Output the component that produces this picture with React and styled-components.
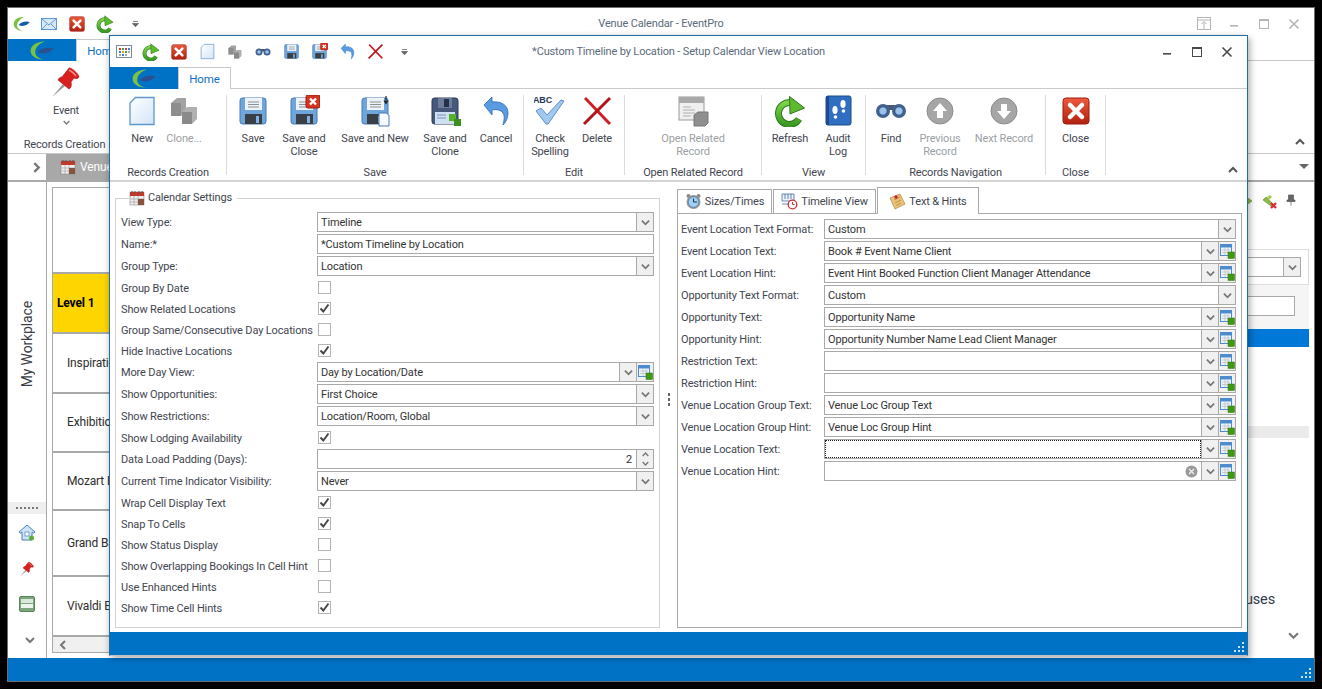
import React from "react";
import styled, { createGlobalStyle } from "styled-components";

const GlobalStyle = createGlobalStyle`
    html, body {
        margin: 0;
        padding: 0;
        background: #000;
        overflow: hidden;
    }
    body {
        font-family: "Roboto", "Liberation Sans", sans-serif;
        font-size: 11px;
        letter-spacing: -0.15px;
        color: #3f4650;
    }
`;

const Screen = styled.div`
    position: relative;
    width: 1322px;
    height: 689px;
    padding: 7px;
    box-sizing: border-box;
    background: #000;
`;

const AppWindow = styled.div`
    width: 1308px;
    height: 675px;
    box-sizing: border-box;
    border: 1px solid #6e6e6e;
    background: #fff;
    display: flex;
    flex-direction: column;
    overflow: hidden;
`;

const TitleBar = styled.div`
    position: relative;
    display: flex;
    align-items: center;
    height: ${(p) => p.$height}px;
    flex: none;
`;

const Qat = styled.div`
    display: flex;
    align-items: center;
    padding-left: ${(p) => p.$pad}px;
    svg { flex: none; }
`;

const QatSlot = styled.div`
    width: ${(p) => p.$w || 28}px;
    height: 22px;
    display: flex;
    align-items: center;
    justify-content: center;
`;

const TitleText = styled.div`
    position: absolute;
    top: 0;
    bottom: 0;
    left: 0;
    right: 0;
    display: flex;
    align-items: center;
    justify-content: center;
    padding-left: ${(p) => p.$shift || 0}px;
    color: #5a6a7a;
    pointer-events: none;
`;

const WindowButtons = styled.div`
    margin-left: auto;
    display: flex;
    align-items: center;
    padding-right: ${(p) => p.$pad}px;
`;

const WindowButton = styled.div`
    width: 30px;
    height: 22px;
    display: flex;
    align-items: center;
    justify-content: center;
`;

const TabRow = styled.div`
    height: 22px;
    flex: none;
    box-sizing: border-box;
    display: flex;
    border-bottom: 1px solid #c9c9c9;
`;

const LogoTab = styled.div`
    width: ${(p) => p.$w}px;
    height: 22px;
    background: #0072c6;
    display: flex;
    align-items: center;
    justify-content: center;
`;

const HomeTab = styled.div`
    width: 53px;
    height: 22px;
    box-sizing: border-box;
    background: #fff;
    border: 1px solid #c9c9c9;
    border-bottom: none;
    color: #0f6fc6;
    font-size: 11.5px;
    display: flex;
    align-items: center;
    justify-content: center;
`;

const BackRibbon = styled.div`
    position: relative;
    height: 93px;
    flex: none;
    box-sizing: border-box;
    border-bottom: 1px solid #c9c9c9;
    display: flex;
`;

const BackGroup = styled.div`
    width: 116px;
    display: flex;
    flex-direction: column;
    align-items: center;
    padding-top: 5px;
    box-sizing: border-box;
`;

const BackEventLabel = styled.div`
    margin-top: 5px;
    line-height: 16px;
`;

const BackLabel = styled.div`
    margin-top: auto;
    padding: 0 3px 0 0;
    white-space: nowrap;
    line-height: 16px;
`;

const CollapseMark = styled.div`
    position: absolute;
    right: ${(p) => p.$right}px;
    bottom: ${(p) => p.$bottom}px;
    line-height: 0;
`;

const BackStrip = styled.div`
    position: relative;
    height: 28px;
    flex: none;
    box-sizing: border-box;
    border-bottom: 2px solid #a9a9a9;
    display: flex;
`;

const StripToggle = styled.div`
    width: 39px;
    box-sizing: border-box;
    border-right: 1px solid #a9a9a9;
    display: flex;
    align-items: center;
    justify-content: center;
    padding-left: 18px;
`;

const DocTab = styled.div`
    width: 62px;
    flex: none;
    overflow: hidden;
    white-space: nowrap;
    background: #a8a8a8;
    color: #fff;
    font-size: 12px;
    display: flex;
    align-items: center;
    gap: 4px;
    padding-left: 13px;
    box-sizing: border-box;
    svg { flex: none; }
`;

const DropMark = styled.div`
    margin-left: auto;
    width: 0;
    height: 0;
    margin-right: 5px;
    margin-top: 10px;
    border-left: 5px solid transparent;
    border-right: 5px solid transparent;
    border-top: 5px solid #666;
`;

const BackBody = styled.div`
    flex: 1;
    display: flex;
    min-height: 0;
`;

const NavColumn = styled.div`
    width: 39px;
    flex: none;
    box-sizing: border-box;
    border-right: 1px solid #a9a9a9;
    display: flex;
    flex-direction: column;
    align-items: center;
`;

const VerticalLabel = styled.div`
    margin-top: 119px;
    height: 88px;
    writing-mode: vertical-rl;
    transform: rotate(180deg);
    font-size: 14px;
    color: #3a3f47;
    text-align: center;
    white-space: nowrap;
`;

const NavGrip = styled.div`
    margin-top: 114px;
    width: 100%;
    height: 12px;
    background: #efefef;
    display: flex;
    align-items: center;
    justify-content: center;
    gap: 2px;
    span {
        width: 2px;
        height: 2px;
        background: #777;
    }
`;

const NavIcon = styled.div`
    height: 36px;
    width: 100%;
    display: flex;
    align-items: center;
    justify-content: center;
`;

const NavFirst = styled(NavIcon)`
    margin-top: 1px;
`;

const NavMore = styled(NavIcon)`
    padding-left: 6px;
    box-sizing: border-box;
`;

const GridWrap = styled.div`
    flex: 1;
    min-width: 0;
    padding: 5px 0 5px 5px;
    display: flex;
`;

const LocationGrid = styled.div`
    width: 60px;
    overflow: hidden;
    box-sizing: border-box;
    border: 1px solid #a9a9a9;
    border-right: none;
    display: flex;
    flex-direction: column;
`;

const LocationRow = styled.div`
    height: ${(p) => p.$h}px;
    flex: none;
    box-sizing: border-box;
    border-bottom: 2px solid #a9a9a9;
    background: ${(p) => (p.$level ? "#ffd500" : "#fff")};
    color: ${(p) => (p.$level ? "#000" : "#2c2c2c")};
    font-weight: ${(p) => (p.$level ? 700 : 400)};
    font-size: 12px;
    padding: 0 0 1px ${(p) => (p.$level ? 4 : 14)}px;
    display: flex;
    align-items: center;
    white-space: nowrap;
`;

const GridScroll = styled.div`
    flex: 1;
    background: #f0f0f0;
    display: flex;
    align-items: center;
    padding-left: 5px;
`;

const BackRight = styled.div`
    width: 120px;
    flex: none;
    display: flex;
    flex-direction: column;
    padding-right: 5px;
    box-sizing: border-box;
`;

const BackToolbar = styled.div`
    height: 67px;
    flex: none;
    display: flex;
    align-items: flex-start;
    justify-content: flex-end;
    gap: 8px;
    padding: 12px 13px 0 0;
    box-sizing: border-box;
`;

const FilterBox = styled.div`
    height: 36px;
    flex: none;
    box-sizing: border-box;
    border: 1px solid #dcdcdc;
    padding: 7px 7px 0 0;
`;

const BackCombo = styled.div`
    height: 20px;
    box-sizing: border-box;
    border: 1px solid #a9a9a9;
    display: flex;
    justify-content: flex-end;
`;

const FilterBand = styled.div`
    height: 44px;
    flex: none;
    background: #f5f5f5;
    padding: 11px 14px 0 0;
    box-sizing: border-box;
`;

const BackInput = styled.div`
    height: 20px;
    box-sizing: border-box;
    border: 1px solid #a9a9a9;
    background: #fff;
`;

const BlueRow = styled.div`
    height: 18px;
    flex: none;
    background: #0078d7;
`;

const GreyRow = styled.div`
    margin-top: 79px;
    height: 12px;
    flex: none;
    background: #ebebeb;
`;

const TreeText = styled.div`
    margin-top: 153px;
    font-size: 14.5px;
    color: #333c48;
    text-align: right;
    padding-right: 34px;
    white-space: nowrap;
`;

const TreeChevron = styled.div`
    margin-top: 22px;
    padding-right: 10px;
    display: flex;
    justify-content: flex-end;
`;

const StatusBar = styled.div`
    position: relative;
    height: ${(p) => p.$h}px;
    flex: none;
    background: #0072c6;
`;

const GripDots = styled.div`
    position: absolute;
    right: 2px;
    bottom: 2px;
    line-height: 0;
`;

const Dialog = styled.div`
    position: absolute;
    left: 109px;
    top: 35px;
    width: 1139px;
    height: 621px;
    box-sizing: border-box;
    border: 1px solid #1b6ea8;
    border-bottom-color: #c0c0c0;
    background: #fff;
    box-shadow: 3px 3px 6px rgba(0, 0, 0, 0.25), -2px 0 5px rgba(0, 0, 0, 0.12);
    display: flex;
    flex-direction: column;
`;

const Ribbon = styled.div`
    position: relative;
    height: 93px;
    flex: none;
    box-sizing: border-box;
    border-bottom: 2px solid #d4d4d4;
    display: flex;
    padding-top: 6px;
`;

const Group = styled.div`
    width: ${(p) => p.$w}px;
    height: 80px;
    flex: none;
    box-sizing: border-box;
    border-right: 1px solid #dcdcdc;
    display: flex;
    flex-direction: column;
`;

const GroupButtons = styled.div`
    flex: 1;
    display: flex;
    justify-content: ${(p) => (p.$center ? "center" : "flex-start")};
    padding-left: ${(p) => p.$pad || 0}px;
`;

const GroupLabel = styled.div`
    text-align: center;
    line-height: 16px;
    margin-bottom: -6px;
    white-space: nowrap;
    color: #3f4650;
`;

const RibbonButton = styled.div`
    width: ${(p) => p.$w}px;
    flex: none;
    display: flex;
    flex-direction: column;
    align-items: center;
    color: ${(p) => (p.$off ? "#9b9fa5" : "#3f4650")};
    text-align: center;
    line-height: 13px;
    svg { flex: none; }
`;

const ButtonCaption = styled.div`
    margin-top: 5px;
    white-space: pre-line;
`;

const DialogBody = styled.div`
    flex: 1;
    min-height: 0;
    display: flex;
    padding: 5px 5px 4px 5px;
`;

const SettingsBox = styled.fieldset`
    width: 545px;
    flex: none;
    box-sizing: border-box;
    margin: 3px 0 0 0;
    padding: 5px 5px 0 5px;
    border: 1px solid #d2d2d2;
    min-width: 0;
`;

const SettingsLegend = styled.legend`
    margin-left: 8px;
    padding: 0 5px 0 0;
    display: flex;
    align-items: center;
    gap: 3px;
    line-height: 16px;
`;

const FormRow = styled.div`
    height: ${(p) => (p.$check ? 21 : 22)}px;
    display: flex;
    align-items: center;
    white-space: nowrap;
`;

const FormLabel = styled.div`
    width: ${(p) => p.$w}px;
    flex: none;
    padding-top: 1px;
`;

const Field = styled.div`
    width: ${(p) => p.$w}px;
    height: 20px;
    flex: none;
    box-sizing: border-box;
    border: 1px solid #a9a9a9;
    background: #fff;
    display: flex;
    align-items: stretch;
    color: #333;
`;

const FieldText = styled.div`
    flex: 1;
    min-width: 0;
    box-sizing: border-box;
    padding-left: 3px;
    padding-top: 1px;
    line-height: 18px;
    text-align: ${(p) => (p.$right ? "right" : "left")};
    padding-right: ${(p) => (p.$right ? 4 : 0)}px;
    outline: ${(p) => (p.$focus ? "1px dotted #222" : "none")};
    outline-offset: -1px;
`;

const FieldButton = styled.div`
    width: 17px;
    flex: none;
    box-sizing: border-box;
    border-left: 1px solid #a9a9a9;
    background: #f0f0f0;
    display: flex;
    align-items: center;
    justify-content: center;
`;

const ClearWrap = styled.div`
    width: 19px;
    flex: none;
    display: flex;
    align-items: center;
    justify-content: center;
`;

const SpinButton = styled.div`
    width: 17px;
    flex: none;
    box-sizing: border-box;
    border-left: 1px solid #a9a9a9;
    background: #f0f0f0;
    display: flex;
    flex-direction: column;
    align-items: center;
    justify-content: center;
    gap: 2px;
`;

const CheckBox = styled.div`
    width: 13px;
    height: 13px;
    margin-left: 1px;
    box-sizing: border-box;
    border: 1px solid #b4b4b4;
    background: #fff;
    display: flex;
    align-items: center;
    justify-content: center;
`;

const Splitter = styled.div`
    width: 17px;
    flex: none;
    display: flex;
    flex-direction: column;
    align-items: center;
    justify-content: center;
    gap: 2px;
    padding-bottom: 17px;
    box-sizing: border-box;
    span {
        width: 2px;
        height: 3px;
        background: #666;
    }
`;

const TabsColumn = styled.div`
    width: 565px;
    flex: none;
    display: flex;
    flex-direction: column;
`;

const TabStrip = styled.div`
    height: 27px;
    flex: none;
    display: flex;
    align-items: flex-end;
    gap: 1px;
    position: relative;
    z-index: 1;
`;

const PageTab = styled.div`
    width: ${(p) => p.$w}px;
    height: ${(p) => (p.$active ? 27 : 25)}px;
    box-sizing: border-box;
    border: 1px solid #a9a9a9;
    border-bottom: ${(p) => (p.$active ? "none" : "1px solid #a9a9a9")};
    background: #fff;
    display: flex;
    align-items: center;
    justify-content: center;
    gap: 3px;
    white-space: nowrap;
`;

const TabPanel = styled.div`
    flex: 1;
    margin-top: -1px;
    border: 1px solid #a9a9a9;
    box-sizing: border-box;
    padding: 4px 5px 0 3px;
`;

const Icon32 = ({ children, size = 32 }) => (
    <svg width={size} height={size} viewBox="0 0 32 32">{children}</svg>
);

const Logo = ({ w = 24, h = 19 }) => (
    <svg width={w} height={h} viewBox="0 0 24 19">
        <path d="M15 .6C7 .5 1 4 .6 9.4c-.3 5 5 8.800 12.400 9-5.800-1.300-8.500-4.800-7.700-8.600C6 5.800 9.800 2 15 .6Z" fill="#7cc242" />
        <path d="M7.500 11.200c3-3.800 9.500-5.400 16-4-2.500 4-10 6.700-16 4Z" fill="#2c4f8f" />
    </svg>
);

const SmallLogo = () => (
    <svg width="17" height="17" viewBox="0 0 24 24">
        <path d="M15 3C7 2.500 1 7 1 13c0 5.500 6 9.500 14 10-7-2-10-5.500-9-10 1-4.500 4.500-8 9-10Z" fill="#7cc242" />
        <path d="M8 14c3-4 10-6 15.500-4-2.500 4.500-10 7.500-15.500 4Z" fill="#0f5fa8" />
    </svg>
);

const RefreshIcon = ({ size = 32 }) => (
    <Icon32 size={size}>
        <defs>
            <linearGradient id="rf" x1="0" y1="0" x2="0" y2="1">
                <stop offset="0" stopColor="#7ed348" />
                <stop offset="1" stopColor="#3a9a22" />
            </linearGradient>
        </defs>
        <path d="M25 24A11 11 0 1 1 16 7.500" fill="none" stroke="#2d7a1f" strokeWidth="7" />
        <path d="M25 24A11 11 0 1 1 16 7.500" fill="none" stroke="url(#rf)" strokeWidth="5" />
        <path d="M15.500 1.500 30.500 13 16 19Z" fill="#5cba2c" stroke="#2d7a1f" strokeWidth="1" strokeLinejoin="round" />
    </Icon32>
);

const RedSquareX = ({ size = 32 }) => (
    <Icon32 size={size}>
        <defs>
            <linearGradient id="rs" x1="0" y1="0" x2="0" y2="1">
                <stop offset="0" stopColor="#ee5a3c" />
                <stop offset="1" stopColor="#b1200f" />
            </linearGradient>
        </defs>
        <rect x="3" y="3" width="26" height="26" rx="3" fill="url(#rs)" stroke="#9a1c10" />
        <path d="M10 10 22 22M22 10 10 22" stroke="#fff" strokeWidth="4.500" strokeLinecap="round" />
    </Icon32>
);

const NewDocIcon = ({ size = 32 }) => (
    <Icon32 size={size}>
        <defs>
            <linearGradient id="nd" x1="0" y1="0" x2="1" y2="1">
                <stop offset="0" stopColor="#fff" />
                <stop offset="1" stopColor="#d3e4f7" />
            </linearGradient>
        </defs>
        <path d="M9.500 2.500H28V29.500H4V8Z" fill="url(#nd)" stroke="#5e97d0" strokeWidth="1.300" />
    </Icon32>
);

const CloneIcon = ({ size = 32 }) => (
    <Icon32 size={size}>
        <path d="M3 8 9 3h9v13l-5 5H3Z" fill="#a3a3a3" />
        <path d="M3 8h10v13H3Z" fill="#8e8e8e" />
        <path d="M14 17l5-5h10v12l-5 5H14Z" fill="#b0b0b0" />
        <path d="M14 17h10v12H14Z" fill="#8a8a8a" />
    </Icon32>
);

const Binoculars = ({ size = 32 }) => (
    <Icon32 size={size}>
        <rect x="10" y="10" width="12" height="5" fill="#4a5a76" />
        <circle cx="8" cy="16" r="7" fill="#44628c" />
        <circle cx="24" cy="16" r="7" fill="#44628c" />
        <circle cx="8" cy="16" r="4.200" fill="#9cc2ec" stroke="#2c5488" />
        <circle cx="24" cy="16" r="4.200" fill="#9cc2ec" stroke="#2c5488" />
    </Icon32>
);

const Floppy = ({ size = 32, dark, badge, paper }) => (
    <Icon32 size={size}>
        <rect x="3" y="3" width="26" height="26" rx="2.500" fill={dark ? "#46597a" : "#6ea6dc"} stroke={dark ? "#2c3b55" : "#4679b3"} />
        {dark ? (
            <>
                <rect x="9" y="3" width="14" height="10" fill="#6b7d9a" />
                <rect x="15" y="4" width="5" height="8" fill="#24304a" />
                <rect x="6" y="17" width="20" height="12" fill="#cfe0f3" />
                <path d="M8 20h9M8 23h9" stroke="#7b92b3" />
            </>
        ) : (
            <>
                <rect x="8" y="3" width="17" height="12" fill="#eef3f9" />
                <path d="M11 7h11M11 9.500h11M11 12h11" stroke="#8a8f96" />
                <rect x="8" y="19" width="17" height="10" fill="#3a3f46" />
                <rect x="19" y="21" width="3" height="7" fill="#7fb2e5" />
            </>
        )}
        {badge === "x" && (
            <>
                <rect x="18" y="0" width="14" height="13" rx="2" fill="#d6341f" stroke="#9a1c10" />
                <path d="M22 3.500l6 6M28 3.500l-6 6" stroke="#fff" strokeWidth="2.400" />
            </>
        )}
        {badge === "clone" && (
            <>
                <rect x="20" y="19" width="7" height="7" fill="#55b02c" />
                <rect x="25" y="24" width="7" height="7" fill="#3c8f1d" />
            </>
        )}
        {paper && (
            <>
                <path d="M20 18h7.500l2.500 2.500V31H20Z" fill="#f6faff" stroke="#4679b3" />
                <path d="M27 1v7M25 5.500l2 3 2-3" stroke="#222" fill="none" strokeWidth="1.200" />
            </>
        )}
    </Icon32>
);

const UndoIcon = ({ size = 32 }) => (
    <Icon32 size={size}>
        <path d="M4 10 12 2v5c9-1 16 3 16 11 0 5-2 9-5 12 1-4 2-9 0-12-2-3-6-4-11-3v5Z" fill="#5a9ae0" stroke="#2a6bb8" strokeWidth=".8" />
    </Icon32>
);

const CrossIcon = ({ size = 32 }) => (
    <Icon32 size={size}>
        <path d="M4 3c8 8 16 17 25 26" stroke="#cf1f26" strokeWidth="3" fill="none" />
        <path d="M29 3C21 11 12 20 3 29" stroke="#b3151c" strokeWidth="3" fill="none" />
    </Icon32>
);

const SpellIcon = () => (
    <Icon32>
        <text x="-1" y="8" fontFamily="Liberation Sans, sans-serif" fontSize="9" fontWeight="700" fill="#26365a">ABC</text>
        <path d="M2 16 7 13l6 7L27 5l3 1-16 23h-2Z" fill="#a3c8f0" stroke="#5a90cc" strokeWidth="1" strokeLinejoin="round" />
    </Icon32>
);

const RelatedIcon = () => (
    <Icon32>
        <rect x="2" y="2" width="25" height="23" fill="#efefef" stroke="#9a9a9a" />
        <rect x="2" y="2" width="25" height="6" fill="#a9a9a9" />
        <path d="M6 12h8M6 15h12M6 18h12M6 21h8" stroke="#b0b0b0" />
        <path d="M17 20l4-3h10v11l-3 3H17Z" fill="#8f8f8f" stroke="#777" />
    </Icon32>
);

const AuditIcon = () => (
    <Icon32>
        <rect x="4" y="1" width="25" height="29" rx="2" fill="#2f6ec0" stroke="#1d4a8c" />
        <rect x="4" y="1" width="3" height="29" fill="#1d4a8c" />
        <ellipse cx="13" cy="15" rx="2.600" ry="4" fill="#fff" />
        <circle cx="13.500" cy="22" r="1.800" fill="#fff" />
        <ellipse cx="21" cy="9" rx="2.600" ry="4" fill="#fff" />
        <circle cx="21.500" cy="16" r="1.800" fill="#fff" />
    </Icon32>
);

const RoundArrow = ({ down }) => (
    <Icon32>
        <circle cx="16" cy="16" r="13" fill="#a6a6a6" stroke="#8c8c8c" />
        <path d={down ? "M16 24l-7-8h4V9h6v7h4Z" : "M16 8l7 8h-4v7h-6v-7H9Z"} fill="#fff" />
    </Icon32>
);

const CalendarIcon = ({ size = 16 }) => (
    <svg width={size} height={size} viewBox="0 0 16 16">
        <rect x="1" y="2" width="14" height="13" fill="#eee" stroke="#8a8a8a" strokeWidth=".6" />
        <rect x="1" y="2" width="14" height="4" fill="#c0392b" />
        <path d="M3 1v2M6 1v2M10 1v2M13 1v2" stroke="#555" />
        <path d="M1 9h14M1 12h14M5 6v9M9 6v9" stroke="#9a9a9a" strokeWidth=".6" />
        <rect x="9" y="9" width="6" height="6" fill="#8a5040" />
    </svg>
);

const PinIcon = ({ size = 32 }) => (
    <Icon32 size={size}>
        <path d="M2 31 13 18l2 2Z" fill="#9a9a9a" />
        <path d="M12 11 19 2c2-1 10 6 10 9-1 2-3 2-5 1l-3 4c1 3 0 6-2 7L8 14c1-2 2-3 4-3Z" fill="#d9201f" stroke="#9c1412" strokeWidth=".6" />
        <path d="M19 4c2 1 5 3 7 6" stroke="#f68b86" strokeWidth="1.500" fill="none" />
    </Icon32>
);

const MailIcon = () => (
    <svg width="16" height="14" viewBox="0 0 16 14">
        <rect x=".5" y="1.500" width="15" height="11" fill="#d7e8f9" stroke="#5f9ad6" />
        <path d="M1 2l7 6 7-6M1 12l5-5M15 12l-5-5" fill="none" stroke="#5f9ad6" />
    </svg>
);

const GridAppIcon = () => (
    <svg width="16" height="13" viewBox="0 0 16 13">
        <rect x=".5" y=".5" width="15" height="12" fill="#fff" stroke="#7a8ca4" />
        <path d="M3 3h2v2H3Z" fill="#d33" /><path d="M6 3h2v2H6Z" fill="#3a3" /><path d="M9 3h2v2H9Z" fill="#d33" /><path d="M12 3h2v2h-2Z" fill="#38c" />
        <path d="M3 6h2v2H3Z" fill="#38c" /><path d="M6 6h2v2H6Z" fill="#e90" /><path d="M9 6h2v2H9Z" fill="#3a3" /><path d="M12 6h2v2h-2Z" fill="#aaa" />
        <path d="M3 9h2v2H3Z" fill="#aaa" /><path d="M6 9h2v2H6Z" fill="#38c" /><path d="M9 9h2v2H9Z" fill="#aaa" />
    </svg>
);

const QatMore = () => (
    <svg width="7" height="6" viewBox="0 0 7 6">
        <path d="M1 .5h5M.5 2.500h6L3.500 5.800Z" stroke="#666" strokeWidth=".8" fill="#666" />
    </svg>
);

const Chevron = ({ size = 9, color = "#777", dir = "down", w = 2 }) => {
    const d = {
        down: "M1 3l4 4 4-4",
        up: "M1 7l4-4 4 4",
        right: "M3 1l4 4-4 4",
        left: "M7 1 3 5l4 4",
    }[dir];
    return (
        <svg width={size} height={size} viewBox="0 0 10 10">
            <path d={d} fill="none" stroke={color} strokeWidth={w} />
        </svg>
    );
};

const AddIcon = () => (
    <svg width="15" height="15" viewBox="0 0 15 15">
        <rect x=".5" y=".5" width="11" height="11" fill="#eef4fb" stroke="#4d8bd0" />
        <rect x=".5" y=".5" width="11" height="3" fill="#4d8bd0" />
        <path d="M2 6h8M2 8.500h8M5 4v7M8 4v7" stroke="#bcbcbc" strokeWidth=".7" />
        <rect x="8" y="8" width="6.500" height="6.500" fill="#3f9a12" stroke="#2c7a0a" strokeWidth=".5" />
    </svg>
);

const ClearIcon = () => (
    <svg width="13" height="13" viewBox="0 0 13 13">
        <circle cx="6.500" cy="6.500" r="6" fill="#9a9a9a" />
        <path d="M4 4l5 5M9 4 4 9" stroke="#eee" strokeWidth="1.400" />
    </svg>
);

const CheckMark = () => (
    <svg width="11" height="11" viewBox="0 0 11 11">
        <path d="M1.500 5.500 4.300 8.500 9.500 1.500" fill="none" stroke="#444" strokeWidth="1.900" />
    </svg>
);

const Minimize = ({ color }) => (
    <svg width="12" height="12" viewBox="0 0 12 12"><rect x="2" y="7" width="8" height="1.600" fill={color} /></svg>
);

const Maximize = ({ color }) => (
    <svg width="12" height="12" viewBox="0 0 12 12">
        <rect x="1.500" y="1.500" width="9" height="9" fill="none" stroke={color} />
        <rect x="1" y="1" width="10" height="2" fill={color} />
    </svg>
);

const CloseMark = ({ color }) => (
    <svg width="12" height="12" viewBox="0 0 12 12">
        <path d="M1.500 1.500l9 9M10.500 1.500l-9 9" stroke={color} strokeWidth="1.600" />
    </svg>
);

const RestoreUp = () => (
    <svg width="14" height="14" viewBox="0 0 14 14">
        <rect x=".5" y=".5" width="13" height="12" fill="none" stroke="#b5b5b5" />
        <path d="M1 3h12M7 12V5M4.500 7 7 4.500 9.500 7" fill="none" stroke="#b5b5b5" />
    </svg>
);

const Grip = () => (
    <svg width="11" height="11" viewBox="0 0 11 11" fill="#cfe3f5">
        <rect x="8" y="0" width="2" height="2" />
        <rect x="4" y="4" width="2" height="2" /><rect x="8" y="4" width="2" height="2" />
        <rect x="0" y="8" width="2" height="2" /><rect x="4" y="8" width="2" height="2" /><rect x="8" y="8" width="2" height="2" />
    </svg>
);

const HomeIcon = () => (
    <svg width="18" height="18" viewBox="0 0 18 18">
        <path d="M9 1 1 8l1.500 1L4 8v8h10V8l1.500 1L17 8Z" fill="#cfe3f7" stroke="#4a7fb8" />
        <rect x="7" y="8" width="4" height="4" fill="#fff" stroke="#4a7fb8" strokeWidth=".7" />
        <circle cx="13.500" cy="14" r="2.500" fill="#5cae34" />
    </svg>
);

const BedIcon = () => (
    <svg width="16" height="16" viewBox="0 0 16 16">
        <rect x=".5" y=".5" width="15" height="15" rx="1.500" fill="#7ca67c" stroke="#5b845b" />
        <rect x="2" y="3" width="12" height="4" fill="#d9e8d9" />
        <rect x="2" y="8" width="12" height="4" fill="#eef5ee" />
    </svg>
);

const ClockIcon = () => (
    <svg width="17" height="17" viewBox="0 0 17 17">
        <circle cx="3.500" cy="3" r="2" fill="#888" /><circle cx="13.500" cy="3" r="2" fill="#888" />
        <circle cx="8.500" cy="9" r="7" fill="#9a9a9a" />
        <circle cx="8.500" cy="9" r="5.300" fill="#9fd0f5" stroke="#3c6a96" strokeWidth=".6" />
        <path d="M8.500 5.500V9H12" fill="none" stroke="#234" />
    </svg>
);

const TimelineIcon = () => (
    <svg width="17" height="17" viewBox="0 0 17 17">
        <path d="M1 1h12v7H1ZM4 1v5M7 1v5M10 1v5M1 11h7" fill="#eaf2fb" stroke="#456fa5" strokeWidth=".8" />
        <circle cx="11.500" cy="11.500" r="4.300" fill="#fff" stroke="#c9352d" strokeWidth="1.300" />
        <path d="M11.500 9v2.500h2" fill="none" stroke="#c9352d" />
    </svg>
);

const NoteIcon = () => (
    <svg width="17" height="17" viewBox="0 0 17 17">
        <path d="M1 5 11 1l5 10-10 5Z" fill="#eec27a" stroke="#ae8440" strokeWidth=".7" />
        <path d="M5 7l6-3M6 10l6-3M7 12.500l5-2.500" stroke="#a57c3a" strokeWidth=".8" />
        <circle cx="7" cy="4" r="1.700" fill="#c8252b" />
    </svg>
);

const Spanner = () => (
    <svg width="16" height="16" viewBox="0 0 16 16">
        <path d="M1 6l3-3 7 7-2 2Z" fill="#8fb84a" stroke="#5e8a24" strokeWidth=".6" />
        <path d="M5 3l3-2 2 2-3 3Z" fill="#a8cc55" />
        <path d="M9 9l5 5M14 9l-5 5" stroke="#d8303a" strokeWidth="2.400" />
    </svg>
);

const SmallPin = () => (
    <svg width="10" height="12" viewBox="0 0 10 12">
        <path d="M2.500 1h5v5h1.500v1.500H1V6h1.500ZM5 7.500V11.500" fill="#666" stroke="#555" strokeWidth=".7" />
    </svg>
);

const GreenTag = () => (
    <svg width="9" height="14" viewBox="0 0 9 14">
        <path d="M0 2 7 7 0 12Z" fill="#8fb84a" stroke="#5e8a24" strokeWidth=".6" />
    </svg>
);

const settings = [
    { label: "View Type:", kind: "combo", value: "Timeline" },
    { label: "Name:*", kind: "text", value: "*Custom Timeline by Location" },
    { label: "Group Type:", kind: "combo", value: "Location" },
    { label: "Group By Date", kind: "check" },
    { label: "Show Related Locations", kind: "check", on: true },
    { label: "Group Same/Consecutive Day Locations", kind: "check" },
    { label: "Hide Inactive Locations", kind: "check", on: true },
    { label: "More Day View:", kind: "comboAdd", value: "Day by Location/Date" },
    { label: "Show Opportunities:", kind: "combo", value: "First Choice" },
    { label: "Show Restrictions:", kind: "combo", value: "Location/Room, Global" },
    { label: "Show Lodging Availability", kind: "check", on: true },
    { label: "Data Load Padding (Days):", kind: "spin", value: "2" },
    { label: "Current Time Indicator Visibility:", kind: "combo", value: "Never" },
    { label: "Wrap Cell Display Text", kind: "check", on: true },
    { label: "Snap To Cells", kind: "check", on: true },
    { label: "Show Status Display", kind: "check" },
    { label: "Show Overlapping Bookings In Cell Hint", kind: "check" },
    { label: "Use Enhanced Hints", kind: "check" },
    { label: "Show Time Cell Hints", kind: "check", on: true },
];

const hints = [
    { label: "Event Location Text Format:", value: "Custom", plain: true },
    { label: "Event Location Text:", value: "Book # Event Name Client" },
    { label: "Event Location Hint:", value: "Event Hint Booked Function Client Manager Attendance" },
    { label: "Opportunity Text Format:", value: "Custom", plain: true },
    { label: "Opportunity Text:", value: "Opportunity Name" },
    { label: "Opportunity Hint:", value: "Opportunity Number Name Lead Client Manager" },
    { label: "Restriction Text:", value: "" },
    { label: "Restriction Hint:", value: "" },
    { label: "Venue Location Group Text:", value: "Venue Loc Group Text" },
    { label: "Venue Location Group Hint:", value: "Venue Loc Group Hint" },
    { label: "Venue Location Text:", value: "", focus: true },
    { label: "Venue Location Hint:", value: "", clear: true },
];

const locations = [
    { name: "", h: 86 },
    { name: "Level 1", h: 60, level: true },
    { name: "Inspiration Ballroom", h: 60 },
    { name: "Exhibition Hall", h: 59 },
    { name: "Mozart Ballroom", h: 58 },
    { name: "Grand Ballroom", h: 66 },
    { name: "Vivaldi Ballroom", h: 60 },
];

const ribbonGroups = [
    {
        label: "Records Creation", w: 117, pad: 11, buttons: [
            { text: "New", w: 42, icon: <NewDocIcon /> },
            { text: "Clone...", w: 42, off: true, icon: <CloneIcon /> },
        ],
    },
    {
        label: "Save", w: 297, pad: 6, buttons: [
            { text: "Save", w: 40, icon: <Floppy /> },
            { text: "Save and\nClose", w: 62, icon: <Floppy badge="x" /> },
            { text: "Save and New", w: 80, icon: <Floppy paper /> },
            { text: "Save and\nClone", w: 60, icon: <Floppy dark badge="clone" /> },
            { text: "Cancel", w: 42, icon: <UndoIcon /> },
        ],
    },
    {
        label: "Edit", w: 101, pad: 3, buttons: [
            { text: "Check\nSpelling", w: 46, icon: <SpellIcon /> },
            { text: "Delete", w: 48, icon: <CrossIcon /> },
        ],
    },
    {
        label: "Open Related Record", w: 137, center: true, buttons: [
            { text: "Open Related\nRecord", w: 100, off: true, icon: <RelatedIcon /> },
        ],
    },
    {
        label: "View", w: 104, pad: 6, buttons: [
            { text: "Refresh", w: 44, icon: <RefreshIcon /> },
            { text: "Audit\nLog", w: 52, icon: <AuditIcon /> },
        ],
    },
    {
        label: "Records Navigation", w: 180, pad: 5, buttons: [
            { text: "Find", w: 40, icon: <Binoculars /> },
            { text: "Previous\nRecord", w: 58, off: true, icon: <RoundArrow /> },
            { text: "Next Record", w: 70, off: true, icon: <RoundArrow down /> },
        ],
    },
    {
        label: "Close", w: 60, center: true, buttons: [
            { text: "Close", w: 50, icon: <RedSquareX /> },
        ],
    },
];

function SettingControl({ row }) {
    if (row.kind === "check") {
        return <CheckBox>{row.on && <CheckMark />}</CheckBox>;
    }
    return (
        <Field $w={337}>
            <FieldText $right={row.kind === "spin"}>{row.value}</FieldText>
            {row.kind === "spin" && (
                <SpinButton>
                    <Chevron size={7} dir="up" w={2} />
                    <Chevron size={7} w={2} />
                </SpinButton>
            )}
            {(row.kind === "combo" || row.kind === "comboAdd") && (
                <FieldButton><Chevron /></FieldButton>
            )}
            {row.kind === "comboAdd" && <FieldButton><AddIcon /></FieldButton>}
        </Field>
    );
}

export default function App() {
    return (
        <Screen>
            <GlobalStyle />
            <AppWindow>
                <TitleBar $height={31}>
                    <Qat $pad={0}>
                        <QatSlot $w={27}><SmallLogo /></QatSlot>
                        <QatSlot><MailIcon /></QatSlot>
                        <QatSlot><RedSquareX size={18} /></QatSlot>
                        <QatSlot><RefreshIcon size={18} /></QatSlot>
                        <QatSlot $w={32}><QatMore /></QatSlot>
                    </Qat>
                    <TitleText>Venue Calendar - EventPro</TitleText>
                    <WindowButtons $pad={5}>
                        <WindowButton><RestoreUp /></WindowButton>
                        <WindowButton><Minimize color="#b5b5b5" /></WindowButton>
                        <WindowButton><Maximize color="#b5b5b5" /></WindowButton>
                        <WindowButton><CloseMark color="#b5b5b5" /></WindowButton>
                    </WindowButtons>
                </TitleBar>
                <TabRow>
                    <LogoTab $w={68}><Logo /></LogoTab>
                    <HomeTab>Home</HomeTab>
                </TabRow>
                <BackRibbon>
                    <BackGroup>
                        <PinIcon size={32} />
                        <BackEventLabel>Event</BackEventLabel>
                        <Chevron size={7} />
                        <BackLabel>Records Creation</BackLabel>
                    </BackGroup>
                    <CollapseMark $right={9} $bottom={6}><Chevron size={10} dir="up" color="#555" /></CollapseMark>
                </BackRibbon>
                <BackStrip>
                    <StripToggle><Chevron size={11} dir="right" color="#777" w={2.200} /></StripToggle>
                    <DocTab><CalendarIcon />Venue Calendar</DocTab>
                    <DropMark />
                </BackStrip>
                <BackBody>
                    <NavColumn>
                        <VerticalLabel>My Workplace</VerticalLabel>
                        <NavGrip>
                            <span /><span /><span /><span /><span /><span />
                        </NavGrip>
                        <NavFirst><HomeIcon /></NavFirst>
                        <NavIcon><PinIcon size={16} /></NavIcon>
                        <NavIcon><BedIcon /></NavIcon>
                        <NavMore><Chevron size={10} /></NavMore>
                    </NavColumn>
                    <GridWrap>
                        <LocationGrid>
                            {locations.map((l, i) => (
                                <LocationRow key={i} $h={l.h} $level={l.level}>{l.name}</LocationRow>
                            ))}
                            <GridScroll><Chevron size={10} dir="left" color="#777" /></GridScroll>
                        </LocationGrid>
                    </GridWrap>
                    <BackRight>
                        <BackToolbar>
                            <GreenTag />
                            <Spanner />
                            <SmallPin />
                        </BackToolbar>
                        <FilterBox>
                            <BackCombo>
                                <FieldButton><Chevron /></FieldButton>
                            </BackCombo>
                        </FilterBox>
                        <FilterBand><BackInput /></FilterBand>
                        <BlueRow />
                        <GreyRow />
                        <TreeText>Warehouses</TreeText>
                        <TreeChevron><Chevron size={11} /></TreeChevron>
                    </BackRight>
                </BackBody>
                <StatusBar $h={23}>
                    <GripDots><Grip /></GripDots>
                </StatusBar>
            </AppWindow>

            <Dialog>
                <TitleBar $height={31}>
                    <Qat $pad={0}>
                        <QatSlot $w={27}><GridAppIcon /></QatSlot>
                        <QatSlot><RefreshIcon size={18} /></QatSlot>
                        <QatSlot><RedSquareX size={18} /></QatSlot>
                        <QatSlot><NewDocIcon size={17} /></QatSlot>
                        <QatSlot><CloneIcon size={16} /></QatSlot>
                        <QatSlot><Binoculars size={16} /></QatSlot>
                        <QatSlot><Floppy size={17} /></QatSlot>
                        <QatSlot><Floppy size={17} badge="x" /></QatSlot>
                        <QatSlot><UndoIcon size={17} /></QatSlot>
                        <QatSlot><CrossIcon size={17} /></QatSlot>
                        <QatSlot $w={30}><QatMore /></QatSlot>
                    </Qat>
                    <TitleText>*Custom Timeline by Location - Setup Calendar View Location</TitleText>
                    <WindowButtons $pad={5}>
                        <WindowButton><Minimize color="#4a4a4a" /></WindowButton>
                        <WindowButton><Maximize color="#4a4a4a" /></WindowButton>
                        <WindowButton><CloseMark color="#4a4a4a" /></WindowButton>
                    </WindowButtons>
                </TitleBar>
                <TabRow>
                    <LogoTab $w={68}><Logo /></LogoTab>
                    <HomeTab>Home</HomeTab>
                </TabRow>
                <Ribbon>
                    {ribbonGroups.map((g) => (
                        <Group key={g.label} $w={g.w}>
                            <GroupButtons $pad={g.pad} $center={g.center}>
                                {g.buttons.map((b) => (
                                    <RibbonButton key={b.text} $w={b.w} $off={b.off}>
                                        {b.icon}
                                        <ButtonCaption>{b.text}</ButtonCaption>
                                    </RibbonButton>
                                ))}
                            </GroupButtons>
                            <GroupLabel>{g.label}</GroupLabel>
                        </Group>
                    ))}
                    <CollapseMark $right={9} $bottom={5}><Chevron size={10} dir="up" color="#555" /></CollapseMark>
                </Ribbon>
                <DialogBody>
                    <SettingsBox>
                        <SettingsLegend><CalendarIcon />Calendar Settings</SettingsLegend>
                        {settings.map((row) => (
                            <FormRow key={row.label} $check={row.kind === "check"}>
                                <FormLabel $w={196}>{row.label}</FormLabel>
                                <SettingControl row={row} />
                            </FormRow>
                        ))}
                    </SettingsBox>
                    <Splitter><span /><span /><span /></Splitter>
                    <TabsColumn>
                        <TabStrip>
                            <PageTab $w={95}><ClockIcon />Sizes/Times</PageTab>
                            <PageTab $w={103}><TimelineIcon />Timeline View</PageTab>
                            <PageTab $w={102} $active><NoteIcon />Text &amp; Hints</PageTab>
                        </TabStrip>
                        <TabPanel>
                            {hints.map((row) => (
                                <FormRow key={row.label}>
                                    <FormLabel $w={143}>{row.label}</FormLabel>
                                    <Field $w={412}>
                                        <FieldText $focus={row.focus}>{row.value}</FieldText>
                                        {row.clear && <ClearWrap><ClearIcon /></ClearWrap>}
                                        <FieldButton><Chevron /></FieldButton>
                                        {!row.plain && <FieldButton><AddIcon /></FieldButton>}
                                    </Field>
                                </FormRow>
                            ))}
                        </TabPanel>
                    </TabsColumn>
                </DialogBody>
                <StatusBar $h={23}>
                    <GripDots><Grip /></GripDots>
                </StatusBar>
            </Dialog>
        </Screen>
    );
}
